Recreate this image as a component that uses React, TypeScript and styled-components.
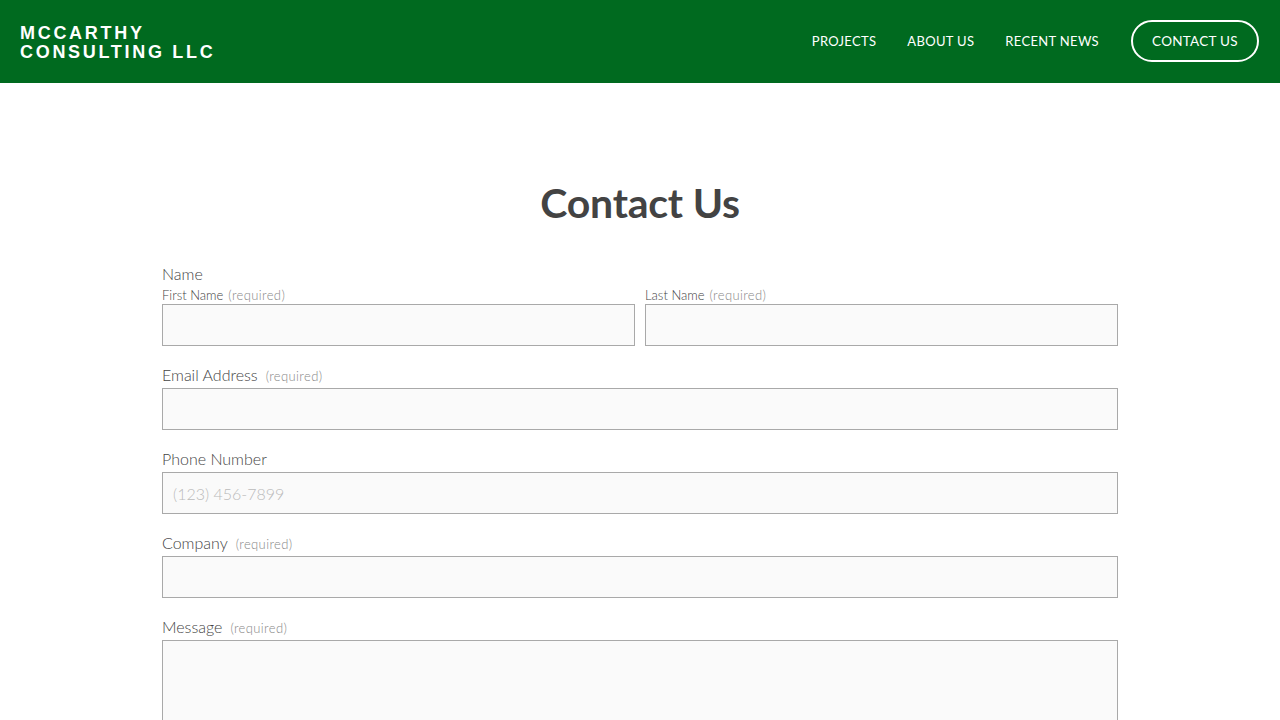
import React from 'react'
import styled, { createGlobalStyle } from 'styled-components'

const GlobalStyle = createGlobalStyle`
  html, body {
    margin: 0;
    padding: 0;
    background: #fff;
    font-family: 'Lato', 'Noto Sans', sans-serif;
  }
  * { box-sizing: border-box; }
`

const Header = styled.header`
  height: 83px;
  background: #006a1f;
  display: flex;
  align-items: center;
  justify-content: space-between;
  padding: 0 21px 0 20px;
`

const Logo = styled.div`
  color: #fff;
  font-family: 'Liberation Sans', Arial, sans-serif;
  font-weight: 700;
  font-size: 18px;
  line-height: 19px;
  letter-spacing: 0.15em;
  text-transform: uppercase;
  margin-top: 3px;
`

const Nav = styled.nav`
  display: flex;
  align-items: center;
  gap: 31px;
  margin-bottom: 1px;
`

const NavLink = styled.a`
  color: #fff;
  font-size: 13px;
  letter-spacing: 0.025em;
  text-decoration: none;
  text-transform: uppercase;
`

const NavButton = styled(NavLink)`
  border: 2px solid #fff;
  border-radius: 22px;
  height: 42px;
  width: 128px;
  display: flex;
  align-items: center;
  justify-content: center;
  font-size: 13.5px;
  letter-spacing: 0.02em;
  margin-left: 1px;
`

const Main = styled.main`
  padding-top: 94px;
`

const Title = styled.h1`
  margin: 0 0 35px;
  text-align: center;
  color: #434343;
  font-size: 41px;
  line-height: 52px;
  font-weight: 700;
  letter-spacing: -0.005em;
`

const Form = styled.form`
  width: 956px;
  margin: 0 auto;
  display: flex;
  flex-direction: column;
  color: #444;
`

const Field = styled.div`
  margin-bottom: 19px;
`

const Label = styled.div`
  font-size: 16px;
  font-weight: 300;
  line-height: 20px;
  margin-bottom: 3px;
  color: #444;
`

const SubLabel = styled.div`
  font-size: 13px;
  font-weight: 300;
  line-height: 14px;
  margin: 1px 0 2px;
  color: #444;
`

const Req = styled.span<{ $small?: boolean }>`
  color: #888;
  font-size: 13px;
  font-weight: 300;
  line-height: 1;
  letter-spacing: 0.03em;
  margin-left: ${p => (p.$small ? '5px' : '8px')};
`

const Row = styled.div`
  display: grid;
  grid-template-columns: 1fr 1fr;
  gap: 10px;
`

const Input = styled.input`
  display: block;
  width: 100%;
  height: 42px;
  background: #fafafa;
  border: 1px solid #a9a9a9;
  padding: 0 10px;
  font-family: inherit;
  font-size: 16px;
  font-weight: 300;
  color: #444;
  &::placeholder {
    color: #bbb;
  }
`

const TextArea = styled.textarea`
  display: block;
  width: 100%;
  height: 120px;
  background: #fafafa;
  border: 1px solid #a9a9a9;
  resize: none;
  font-family: inherit;
`

const App = () => {
  return (
    <>
      <GlobalStyle />
      <Header>
        <Logo>
          McCarthy
          <br />
          Consulting LLC
        </Logo>
        <Nav>
          <NavLink href="#">Projects</NavLink>
          <NavLink href="#">About Us</NavLink>
          <NavLink href="#">Recent News</NavLink>
          <NavButton href="#">Contact Us</NavButton>
        </Nav>
      </Header>

      <Main>
        <Title>Contact Us</Title>
        <Form>
          <Field>
            <Label>Name</Label>
            <Row>
              <div>
                <SubLabel>
                  First Name<Req $small>(required)</Req>
                </SubLabel>
                <Input type="text" />
              </div>
              <div>
                <SubLabel>
                  Last Name<Req $small>(required)</Req>
                </SubLabel>
                <Input type="text" />
              </div>
            </Row>
          </Field>

          <Field>
            <Label>
              Email Address<Req>(required)</Req>
            </Label>
            <Input type="email" />
          </Field>

          <Field>
            <Label>Phone Number</Label>
            <Input type="tel" placeholder="(123) 456-7899" />
          </Field>

          <Field>
            <Label>
              Company<Req>(required)</Req>
            </Label>
            <Input type="text" />
          </Field>

          <Field>
            <Label>
              Message<Req>(required)</Req>
            </Label>
            <TextArea />
          </Field>
        </Form>
      </Main>
    </>
  )
}

export default App
